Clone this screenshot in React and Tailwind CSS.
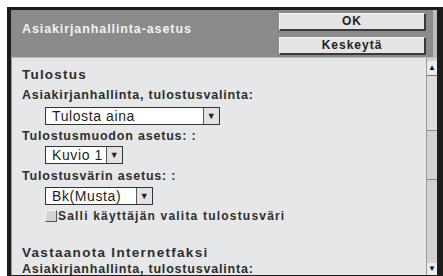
import React from 'react';

const font = { fontFamily: '"Liberation Sans", Arial, sans-serif' };

function Select({ label, width }) {
  return (
    <div className={`flex h-[18px] border border-[#333] bg-white ${width}`}>
      <div className="flex-1 pl-[6px] text-[14px] leading-[16px] font-normal tracking-[0.6px] text-[#1e1e1e] whitespace-nowrap overflow-hidden">{label}</div>
      <div className="w-[16px] shrink-0 border-l border-[#555] bg-[#e3e3e3] flex items-center justify-center">
        <span className="text-[9px] leading-none text-[#222]">▼</span>
      </div>
    </div>
  );
}

function Button({ children }) {
  return (
    <div className="h-[18px] w-[147px] bg-[#e4e4e4] border-t border-l border-[#f4f4f4] border-r-2 border-b-2 border-r-[#3a3a3a] border-b-[#3a3a3a] flex items-center justify-center text-[12px] font-bold tracking-[1px] text-[#222]">
      {children}
    </div>
  );
}

export default function App() {
  return (
    <div className="w-[443px] h-[276px] bg-white pt-[7px] pl-[7px] overflow-hidden" style={font}>
      <div className="h-[276px] border-t-[3px] border-l-[4px] border-r-[6px] border-b-[8px] border-[#1c1c1c] bg-[#bdbdbd] flex flex-col">
        {/* header */}
        <div className="h-[47px] bg-[#8b8b8b] flex items-center pl-[11px] pr-[7px] mr-[4px] shrink-0">
          <div className="flex-1 text-[12.5px] font-bold tracking-[0.9px] text-[#f2f2f2] pb-[8px]">Asiakirjanhallinta-asetus</div>
          <div className="flex flex-col gap-[6px]">
            <Button>OK</Button>
            <Button>Keskeytä</Button>
          </div>
        </div>
        {/* body */}
        <div className="flex-1 flex mt-[1px] bg-[#e6e7e8] border-l border-[#9a9a9a] overflow-hidden">
          <div className="flex-1 pl-[10px] pt-[7px] text-[#2e2e2e] font-bold tracking-[0.8px] text-[12.5px] leading-[20px] overflow-hidden">
            <div className="text-[13.5px] tracking-[1.2px]">Tulostus</div>
            <div>Asiakirjanhallinta, tulostusvalinta:</div>
            <div className="pl-[23px] pt-[2px] pb-[1px]">
              <Select label="Tulosta aina" width="w-[175px]" />
            </div>
            <div>Tulostusmuodon asetus: :</div>
            <div className="pl-[23px] pb-[2px]">
              <Select label="Kuvio 1" width="w-[78px]" />
            </div>
            <div>Tulostusvärin asetus: :</div>
            <div className="pl-[23px] pt-[1px]">
              <Select label="Bk(Musta)" width="w-[108px]" />
            </div>
            <div className="pl-[23px] flex items-center h-[21px]">
              <div className="w-[12px] h-[12px] bg-[#d4d4d4] border-t border-l border-[#f5f5f5] border-r border-b border-r-[#555] border-b-[#555]"></div>
              <span className="leading-[14px] ml-[1px] text-[12px] tracking-[1.2px]">Salli käyttäjän valita tulostusväri</span>
            </div>
            <div className="h-[17px]"></div>
            <div className="text-[13.5px] tracking-[1.3px]">Vastaanota Internetfaksi</div>
            <div className="-mt-[4px]">Asiakirjanhallinta, tulostusvalinta:</div>
          </div>
          {/* scrollbar */}
          <div className="w-[11px] bg-[#d2d2d2] border-l border-[#9a9a9a] flex flex-col pt-[3px]">
            <div className="h-[15px] bg-[#ececec] border-b border-[#777] flex items-center justify-center text-[8px] leading-none text-[#111]">▲</div>
            <div className="h-[55px] border-b border-[#8a8a8a] bg-[#dcdcdc]"></div>
            <div className="h-[49px] border-b border-[#8a8a8a]"></div>
            <div className="flex-1"></div>
            <div className="h-[12px] bg-[#ececec] flex items-center justify-center text-[8px] leading-none text-[#111]">▼</div>
          </div>
        </div>
      </div>
    </div>
  );
}
